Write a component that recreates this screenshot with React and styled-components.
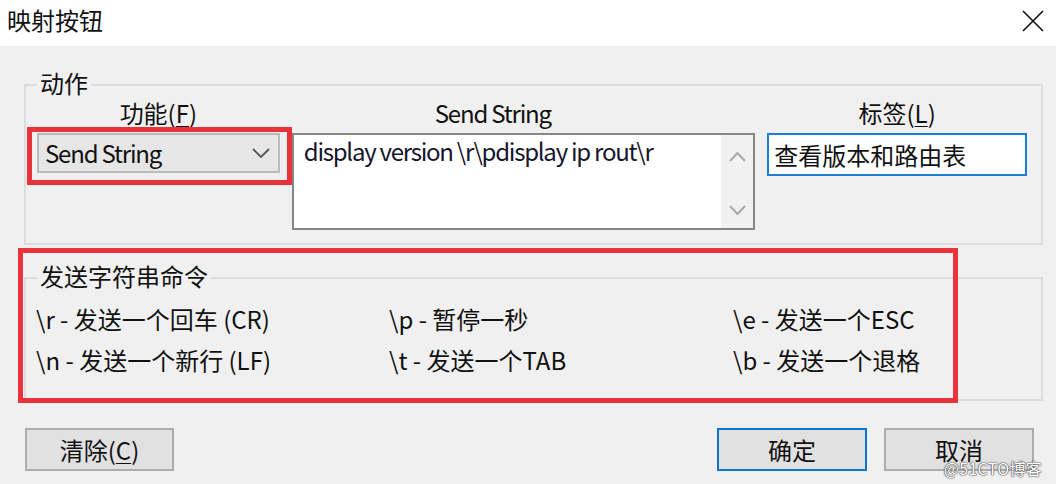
import React from "react";
import styled, { createGlobalStyle } from "styled-components";

const GlobalStyle = createGlobalStyle`
  html, body { margin: 0; padding: 0; }
  body {
    width: 1056px;
    height: 484px;
    overflow: hidden;
    background: #f0f0f0;
    font-family: "Noto Sans CJK SC", "Noto Sans", sans-serif;
    color: #111;
  }
  * { box-sizing: border-box; }
`;

const Dialog = styled.div`
  position: relative;
  width: 1056px;
  height: 484px;
  display: flex;
  flex-direction: column;
  background: #f0f0f0;
`;

const TitleBar = styled.div`
  height: 46px;
  flex: none;
  background: #fff;
  display: flex;
  justify-content: space-between;
  align-items: flex-start;
  padding: 8px 12px 0 7px;
`;

const Title = styled.div`
  font-size: 24px;
  line-height: 24px;
  color: #111;
`;

const CloseButton = styled.div`
  margin-top: 2px;
  width: 22px;
  height: 22px;
  display: flex;
`;

const Body = styled.div`
  padding: 0 13px 0 24px;
  display: flex;
  flex-direction: column;
`;

const GroupBox = styled.section`
  position: relative;
  border: 2px solid #dcdcdc;
  margin-top: ${(p) => p.$top}px;
  padding: ${(p) => p.$pad};
`;

const GroupTitle = styled.span`
  position: absolute;
  top: -15px;
  left: 11px;
  padding: 0 3px;
  background: #f0f0f0;
  font-size: 24px;
  line-height: 24px;
`;

const FieldRow = styled.div`
  display: flex;
  gap: 12px;
  align-items: flex-start;
`;

const Field = styled.div`
  display: flex;
  flex-direction: column;
  gap: 8px;
  width: ${(p) => p.$w}px;
`;

const FieldLabel = styled.div`
  font-size: 24px;
  line-height: 24px;
  white-space: nowrap;
  text-align: ${(p) => (p.$indent ? "left" : "center")};
  padding-left: ${(p) => p.$indent || 0}px;
  letter-spacing: ${(p) => (p.$latin ? "-1.2px" : "0")};
  u { text-decoration-thickness: 1px; text-underline-offset: 3px; }
`;

const ComboWrap = styled.div`
  position: relative;
`;

const Combo = styled.div`
  height: 40px;
  border: 2px solid #bababa;
  background: #e6e6e6;
  display: flex;
  align-items: center;
  justify-content: space-between;
  padding: 0 8px 0 6px;
  font-size: 24px;
  line-height: 30px;
  letter-spacing: -1.2px;
`;

const TextBox = styled.div`
  height: 97px;
  border: 2px solid #868686;
  background: #fff;
  display: flex;
`;

const TextContent = styled.div`
  flex: 1;
  padding: 1px 10px 0;
  font-size: 24px;
  line-height: 30px;
  letter-spacing: -1.25px;
  color: #15152e;
  white-space: nowrap;
`;

const ScrollTrack = styled.div`
  width: 32px;
  background: #f1f1f1;
  display: flex;
  flex-direction: column;
  justify-content: space-between;
  align-items: center;
  padding: 17px 0 13px;
`;

const LabelInput = styled.div`
  height: 43px;
  border: 2px solid #1a7ed6;
  background: #fff;
  display: flex;
  align-items: center;
  padding-left: 5px;
  font-size: 24px;
  line-height: 30px;
`;

const Commands = styled.div`
  display: grid;
  grid-template-columns: 353px 344px 1fr;
  row-gap: 17px;
  font-size: 24px;
  line-height: 24px;
  white-space: nowrap;
`;

const ButtonRow = styled.div`
  display: flex;
  justify-content: space-between;
  margin-top: 27px;
  padding: 0 9px 0 1px;
`;

const ButtonGroup = styled.div`
  display: flex;
  gap: 17px;
`;

const Button = styled.div`
  width: ${(p) => p.$w}px;
  height: 43px;
  background: #e1e1e1;
  border: 2px solid ${(p) => (p.$primary ? "#0a74d2" : "#adadad")};
  display: flex;
  align-items: center;
  justify-content: center;
  font-size: 24px;
  line-height: 24px;
  u { text-decoration-thickness: 1px; text-underline-offset: 3px; }
`;

const RedFrame = styled.div`
  position: absolute;
  pointer-events: none;
  border: 5px solid #e8333b;
  left: ${(p) => p.$l}px;
  top: ${(p) => p.$t}px;
  width: ${(p) => p.$w}px;
  height: ${(p) => p.$h}px;
  z-index: 2;
`;

const Watermark = styled.div`
  position: absolute;
  right: 14px;
  bottom: 7px;
  font-size: 16px;
  line-height: 18px;
  letter-spacing: 0.3px;
  color: #fff;
  text-shadow: 0 0 1px #444, 0 0 2px #555, 0 0 1px #444;
  z-index: 3;
`;

const Chevron = ({ up, color, w = 18, h = 10, sw = 1.8 }) => (
  <svg width={w} height={h} viewBox={`0 0 ${w} ${h}`}>
    <polyline
      points={up ? `1,${h - 1} ${w / 2},1 ${w - 1},${h - 1}` : `1,1 ${w / 2},${h - 1} ${w - 1},1`}
      fill="none"
      stroke={color}
      strokeWidth={sw}
    />
  </svg>
);

const commands = [
  "\\r - 发送一个回车 (CR)",
  "\\p - 暂停一秒",
  "\\e - 发送一个ESC",
  "\\n - 发送一个新行 (LF)",
  "\\t - 发送一个TAB",
  "\\b - 发送一个退格",
];

export default function App() {
  return (
    <>
      <GlobalStyle />
      <Dialog>
        <TitleBar>
          <Title>映射按钮</Title>
          <CloseButton>
            <svg width="22" height="22" viewBox="0 0 22 22">
              <path d="M1 1 L21 21 M21 1 L1 21" stroke="#111" strokeWidth="1.6" fill="none" />
            </svg>
          </CloseButton>
        </TitleBar>
        <Body>
          <GroupBox $top={38} $pad="15px 14px 13px 11px">
            <GroupTitle>动作</GroupTitle>
            <FieldRow>
              <Field $w={243}>
                <FieldLabel>
                  功能(<u>F</u>)
                </FieldLabel>
                <ComboWrap>
                  <Combo>
                    <span>Send String</span>
                    <Chevron color="#555" />
                  </Combo>
                  <RedFrame $l={-10} $t={-6} $w={265} $h={58} />
                </ComboWrap>
              </Field>
              <Field $w={464}>
                <FieldLabel $indent={143} $latin>
                  Send String
                </FieldLabel>
                <TextBox>
                  <TextContent>display version \r\pdisplay ip rout\r</TextContent>
                  <ScrollTrack>
                    <Chevron up color="#a8a8a8" w={17} h={10} sw={2} />
                    <Chevron color="#a8a8a8" w={17} h={10} sw={2} />
                  </ScrollTrack>
                </TextBox>
              </Field>
              <Field $w={260}>
                <FieldLabel>
                  标签(<u>L</u>)
                </FieldLabel>
                <LabelInput>查看版本和路由表</LabelInput>
              </Field>
            </FieldRow>
          </GroupBox>

          <GroupBox $top={32} $pad="28px 0 27px 10px">
            <GroupTitle>发送字符串命令</GroupTitle>
            <Commands>
              {commands.map((c) => (
                <div key={c}>{c}</div>
              ))}
            </Commands>
            <RedFrame $l={-8} $t={-31} $w={940} $h={155} />
          </GroupBox>

          <ButtonRow>
            <Button $w={149}>
              清除(<u>C</u>)
            </Button>
            <ButtonGroup>
              <Button $w={150} $primary>
                确定
              </Button>
              <Button $w={150}>取消</Button>
            </ButtonGroup>
          </ButtonRow>
        </Body>
        <Watermark>@51CTO博客</Watermark>
      </Dialog>
    </>
  );
}
